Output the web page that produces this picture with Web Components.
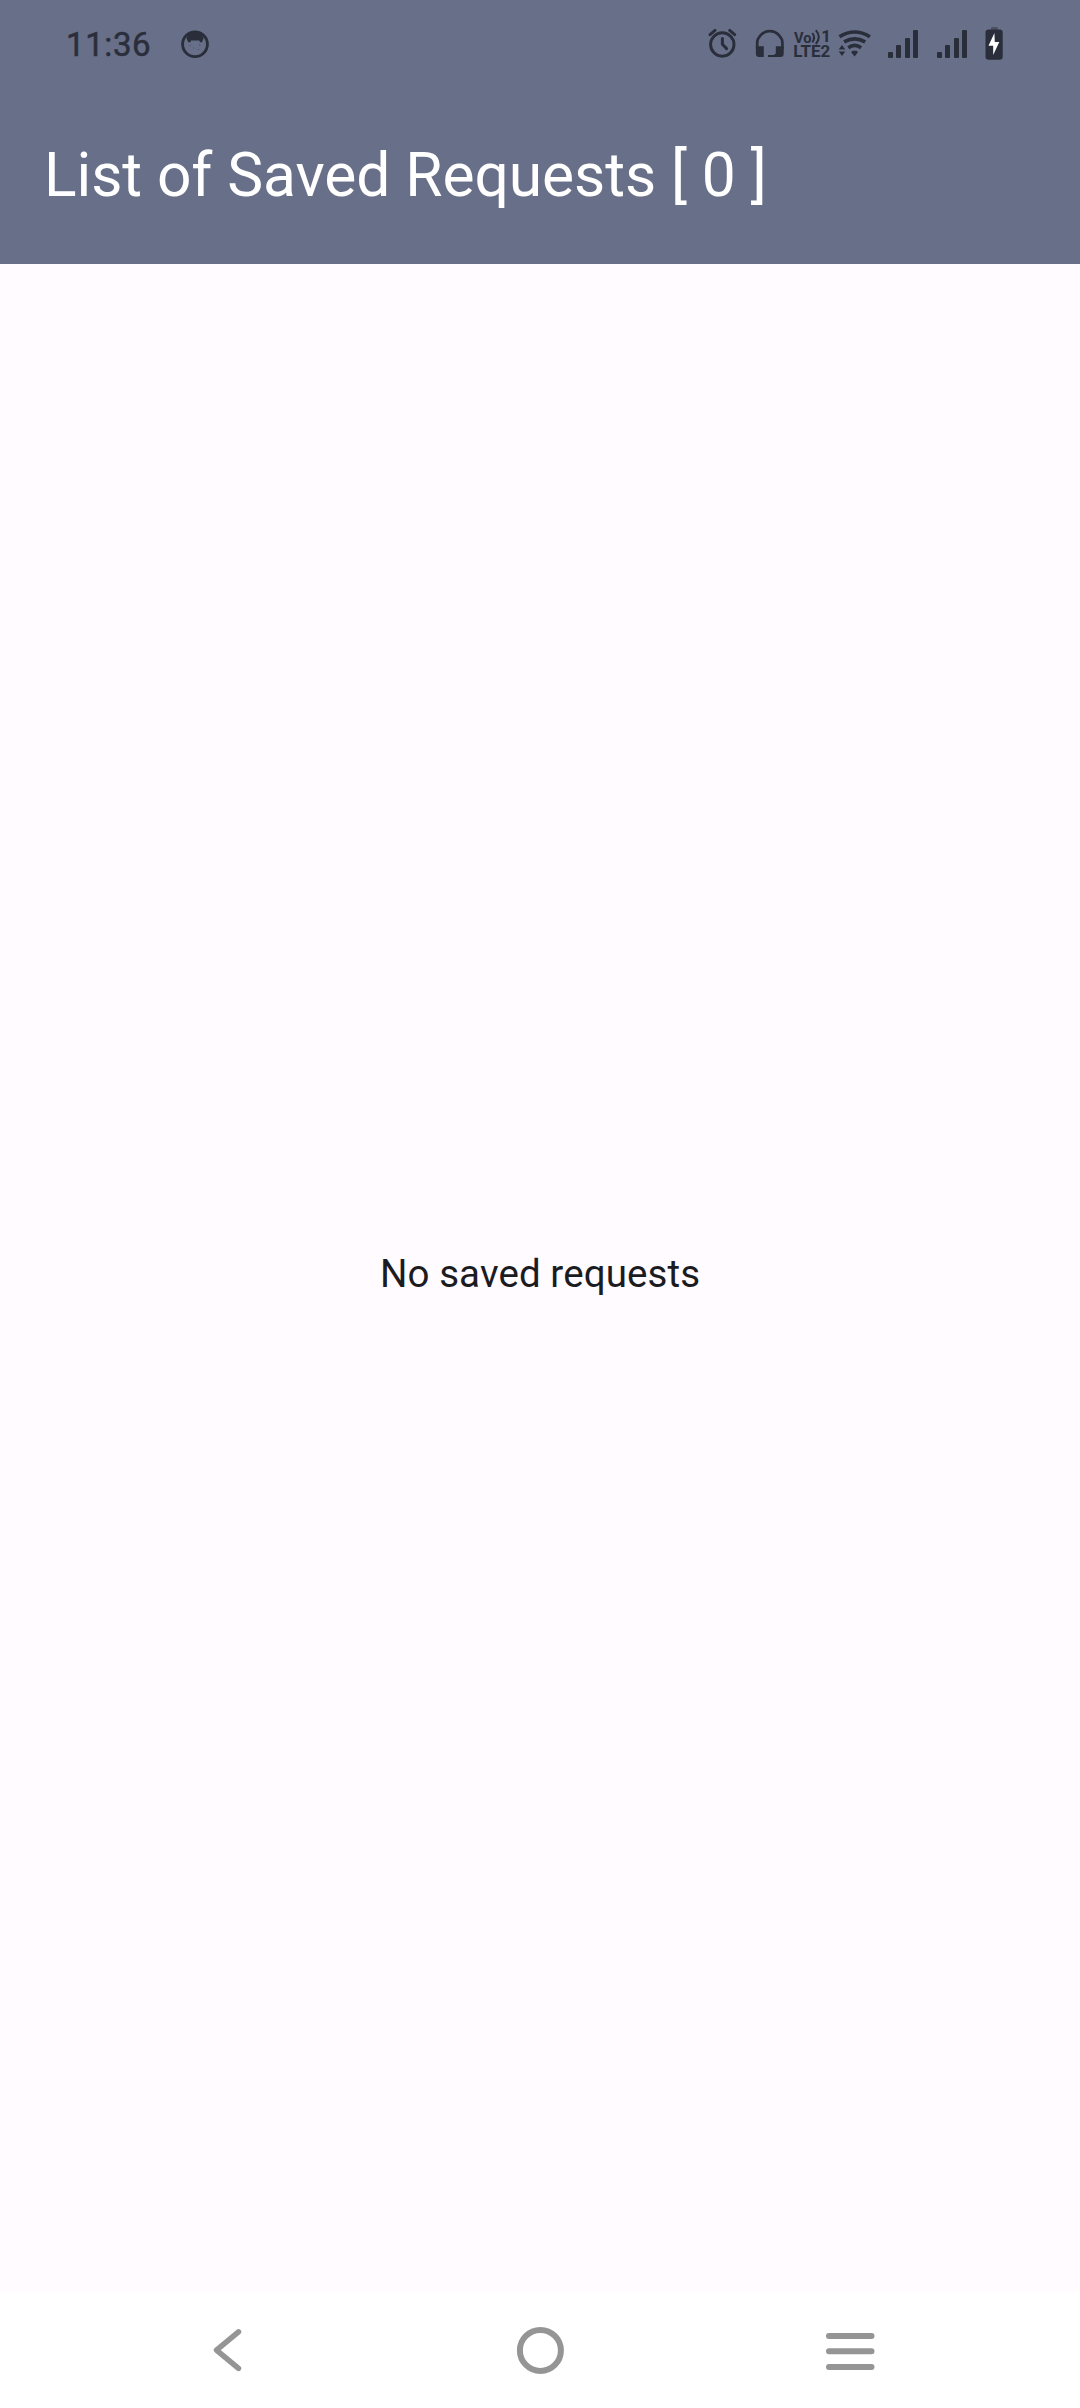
<!DOCTYPE html>
<html lang="en">
<head>
<meta charset="utf-8">
<title>List of Saved Requests</title>
<style>
html,body{margin:0;padding:0}
body{font-family:Roboto,sans-serif;width:1080px;height:2408px;overflow:hidden;background:#fffbff}
</style>
</head>
<body>
<saved-requests-screen></saved-requests-screen>
<script>
const define = (name, html) => customElements.define(name, class extends HTMLElement {
  constructor() {
    super();
    this.attachShadow({mode: 'open'}).innerHTML = html;
  }
});

define('signal-bars', `
<style>:host{display:flex;align-items:flex-end;gap:3.6px;width:31px;height:28px}
i{width:5px;border-radius:1px;background:#2a2e3b}</style>
<i style="height:6px"></i><i style="height:13px"></i><i style="height:20.5px"></i><i style="height:28px"></i>`);

define('status-bar', `
<style>
:host{display:flex;align-items:center;justify-content:space-between;height:88px;padding:0 77px 0 66px;box-sizing:border-box;color:#2a2e3b}
.side{display:flex;align-items:center}
.clock{font-size:33px;line-height:40px;font-weight:400;-webkit-text-stroke:.5px #2a2e3b;letter-spacing:.6px;width:114px;padding-top:2px}
svg{display:block;height:40px;flex:none}
text{font-family:Roboto,sans-serif;font-weight:700;fill:#2a2e3b}
</style>
<div class="side">
  <div class="clock">11:36</div>
  <svg width="30" viewBox="180 24 30 40"><circle cx="195" cy="44.2" r="12.4" fill="none" stroke="#2a2e3b" stroke-width="2.8"/><path d="M186.500 38.500Q188 31 195 31Q202 31 203.500 38.500L202 42.200L200 42.200L199.300 40.400L191 40.400L190.500 42.200L188.300 42.200Z" fill="#2a2e3b"/><path d="M189.500 45.500h1.200M199 45h1.200M193 48h1M198 49.500h1" stroke="#4a4f63" stroke-width="1"/></svg>
</div>
<div class="side">
  <svg width="30" viewBox="708 24 30 40" fill="none" stroke="#2a2e3b" stroke-linecap="round"><circle cx="722.300" cy="44.500" r="11.700" stroke-width="2.900"/><path d="M710 34.600L715 30.400M729.700 30.400L734.700 34.600" stroke-width="2.900"/><path d="M722.400 38.500V44.300L726.600 48.600" stroke-width="3" stroke-linejoin="round"/></svg>
  <svg width="30" viewBox="755 24 30 40" style="margin-left:17px"><path d="M757.200 49V43Q757.200 39 760.300 35.700Q764 31.100 769.800 31.100Q775.600 31.100 779.300 35.700Q782.400 39 782.400 43V49" fill="none" stroke="#2a2e3b" stroke-width="2.700"/><path d="M755.900 46.300H763.800V57H759Q755.900 57 755.900 53.800ZM775.800 46.300H783.700V53.800Q783.700 57 780.600 57H775.800L773.600 57H768V55H773.800L775.800 53.500Z" fill="#2a2e3b"/></svg>
  <svg width="38" viewBox="793 24 38 40" style="margin-left:8px"><text x="794" y="42.600" font-size="15.500" textLength="17.500" lengthAdjust="spacingAndGlyphs">Vo</text><path d="M812.300 33Q815.900 37.500 812.300 42.300M815.800 30.200Q821.800 37 815.800 44" fill="none" stroke="#2a2e3b" stroke-width="2"/><text x="821.200" y="41.500" font-size="16.800">1</text><text x="793.200" y="57" font-size="16" textLength="37" lengthAdjust="spacingAndGlyphs">LTE2</text></svg>
  <svg width="34" viewBox="838 24 34 40" style="margin-left:7px" fill="none" stroke="#2a2e3b" stroke-width="3.600"><path d="M839.500 36.700Q854.700 27.200 869.900 36.700M844.100 41.900Q854.700 35.800 865.200 41.900M848.300 47.800Q854.700 43.100 861.100 47.800"/><path d="M852.600 50.800H856.500Q858.500 51.800 857 53.500L854.600 56.500L852.100 53.500Q850.600 51.800 852.600 50.800ZM842 45L845.300 49.400H838.700ZM842 56L845.300 51.500H838.700Z" fill="#2a2e3b" stroke="none"/></svg>
  <signal-bars style="margin-left:16px"></signal-bars>
  <signal-bars style="margin-left:18px"></signal-bars>
  <svg width="18" viewBox="985.500 24 18 40" style="margin-left:17.500px"><rect x="991.500" y="27" width="6.800" height="4" rx="1" fill="#4b5063"/><rect x="986" y="29.500" width="17.200" height="30.200" rx="3" fill="#2a2e3b"/><path d="M994.900 33L989 45.800H993.700V55L999.800 41.900H995.300Z" fill="#fff"/></svg>
</div>`);

define('top-bar', `
<style>:host{display:flex;align-items:center;height:176px;box-sizing:border-box;padding:0 44px 2px 44px;color:#fff}
h1{margin:0;font-size:60.5px;line-height:77px;font-weight:400;letter-spacing:-.08px;white-space:pre}</style>
<h1><slot></slot></h1>`);

define('empty-state', `
<style>:host{display:flex;flex:1;align-items:center;justify-content:center;color:#1c1b1f;font-size:38.5px;line-height:55px;letter-spacing:.1px;padding-bottom:9px}</style>
<slot></slot>`);

define('nav-bar', `
<style>:host{display:flex;align-items:center;justify-content:space-between;height:116px;box-sizing:border-box;padding:0 203px;background:#fff}
svg{display:block;width:52px;height:52px;fill:none;stroke:#959595;stroke-width:6;stroke-linecap:round;stroke-linejoin:round}</style>
<svg viewBox="203 2324 52 52"><path d="M238.500 2331.800L216.500 2350.100L238.500 2368.400" stroke-width="5.500"/></svg>
<svg viewBox="514 2324 52 52"><circle cx="540.400" cy="2350.400" r="20.500"/></svg>
<svg viewBox="825 2324 52 52"><path d="M829 2336H871.500M829 2351.300H871.500M829 2367H871.500"/></svg>`);

define('saved-requests-screen', `
<style>:host{display:flex;flex-direction:column;width:1080px;height:2408px;background:#fffbff}
header{background:#686f88;height:264px;flex:none}</style>
<header><status-bar></status-bar><top-bar>List of Saved Requests [ 0 ]</top-bar></header>
<empty-state>No saved requests</empty-state>
<nav-bar></nav-bar>`);
</script>
</body>
</html>
